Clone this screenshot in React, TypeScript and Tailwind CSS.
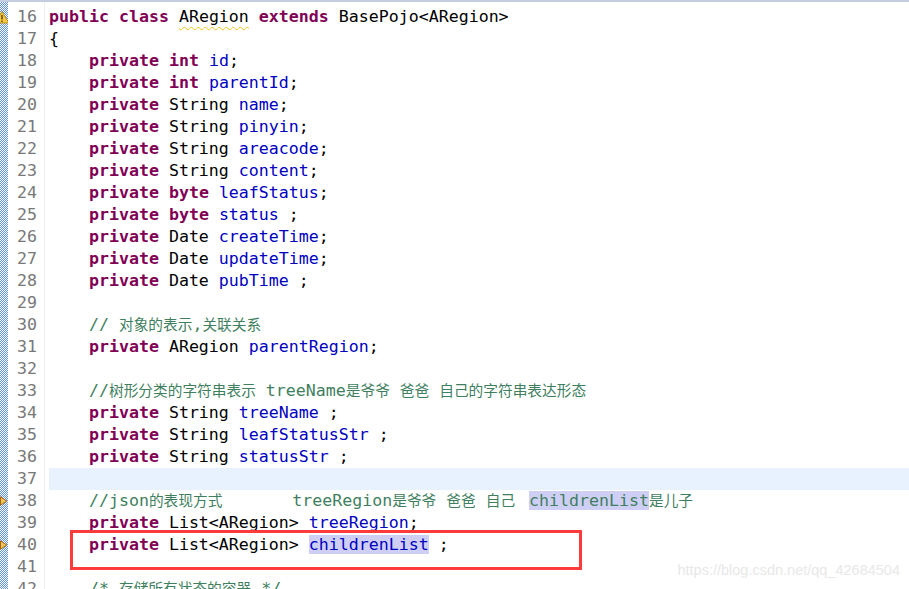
import React from "react";

type Tok = [string, string?];

const CLS: Record<string, string> = {
  k: "font-bold text-[#7f0055]",
  f: "text-[#0000c0]",
  fo: "text-[#0000c0] bg-[#cfcff5]",
  c: "text-[#3f7f5f]",
  co: "text-[#3f7f5f] bg-[#cfcff5]",
  w: "underline decoration-wavy decoration-[#f2c21a] decoration-1 underline-offset-[4px]",
  gap: "inline-block w-[4px]",
};

function renderText(text: string, key: string) {
  const parts = text.split(/([\u3000-\u9fff\uff00-\uffef]+)/);
  return parts.map((p, i) =>
    /[\u3000-\u9fff\uff00-\uffef]/.test(p) ? (
      <span key={key + i} className="text-[14.7px]">
        {p}
      </span>
    ) : (
      <React.Fragment key={key + i}>{p}</React.Fragment>
    )
  );
}

const P: Tok = ["private", "k"];

type Line = { n: number; toks: Tok[]; hl?: boolean; marker?: "warn" | "override" };

const lines: Line[] = [
  {
    n: 16,
    marker: "warn",
    toks: [["public", "k"], [" "], ["class", "k"], [" "], ["ARegion", "w"], [" "], ["extends", "k"], [" BasePojo<ARegion>"]],
  },
  { n: 17, toks: [["{"]] },
  { n: 18, toks: [["    "], P, [" "], ["int", "k"], [" "], ["id", "f"], [";"]] },
  { n: 19, toks: [["    "], P, [" "], ["int", "k"], [" "], ["parentId", "f"], [";"]] },
  { n: 20, toks: [["    "], P, [" String "], ["name", "f"], [";"]] },
  { n: 21, toks: [["    "], P, [" String "], ["pinyin", "f"], [";"]] },
  { n: 22, toks: [["    "], P, [" String "], ["areacode", "f"], [";"]] },
  { n: 23, toks: [["    "], P, [" String "], ["content", "f"], [";"]] },
  { n: 24, toks: [["    "], P, [" "], ["byte", "k"], [" "], ["leafStatus", "f"], [";"]] },
  { n: 25, toks: [["    "], P, [" "], ["byte", "k"], [" "], ["status", "f"], [" ;"]] },
  { n: 26, toks: [["    "], P, [" Date "], ["createTime", "f"], [";"]] },
  { n: 27, toks: [["    "], P, [" Date "], ["updateTime", "f"], [";"]] },
  { n: 28, toks: [["    "], P, [" Date "], ["pubTime", "f"], [" ;"]] },
  { n: 29, toks: [] },
  { n: 30, toks: [["    "], ["// 对象的表示,关联关系", "c"]] },
  { n: 31, toks: [["    "], P, [" ARegion "], ["parentRegion", "f"], [";"]] },
  { n: 32, toks: [] },
  { n: 33, toks: [["    "], ["//树形分类的字符串表示 treeName是爷爷 爸爸 自己的字符串表达形态", "c"]] },
  { n: 34, toks: [["    "], P, [" String "], ["treeName", "f"], [" ;"]] },
  { n: 35, toks: [["    "], P, [" String "], ["leafStatusStr", "f"], [" ;"]] },
  { n: 36, toks: [["    "], P, [" String "], ["statusStr", "f"], [" ;"]] },
  { n: 37, toks: [], hl: true },
  {
    n: 38,
    marker: "override",
    toks: [
      ["    "],
      ["//json的表现方式       treeRegion是爷爷 爸爸 自己 ", "c"],
      ["", "gap"],
      ["childrenList", "co"],
      ["是儿子", "c"],
    ],
  },
  { n: 39, toks: [["    "], P, [" List<ARegion> "], ["treeRegion", "f"], [";"]] },
  { n: 40, marker: "override", toks: [["    "], P, [" List<ARegion> "], ["childrenList", "fo"], [" ;"]] },
  { n: 41, toks: [] },
  { n: 42, toks: [["    "], ["/* 存储所有状态的容器 */", "c"]] },
];

function WarnIcon() {
  return (
    <svg width="8" height="13" viewBox="0 0 8 13" className="absolute left-0 top-[5px]">
      <polygon points="-5,12 2,0.5 9,12" fill="#f5c842" stroke="#b98a10" strokeWidth="1" />
      <line x1="2" y1="4" x2="2" y2="8.5" stroke="#5a4000" strokeWidth="1.4" />
      <rect x="1.3" y="9.6" width="1.4" height="1.4" fill="#5a4000" />
    </svg>
  );
}

function OverrideIcon() {
  return (
    <svg width="8" height="10" viewBox="0 0 8 10" className="absolute left-0 top-[6px]">
      <polygon points="0.5,0.8 6.8,5 0.5,9.2" fill="#f2c45a" stroke="#a8650c" strokeWidth="1" />
    </svg>
  );
}

export default function App() {
  const mono = "font-['DejaVu_Sans_Mono','Noto_Sans_CJK_SC',monospace] text-[16.6px]";
  return (
    <div className="relative w-[909px] h-[589px] overflow-hidden bg-white flex flex-col">
      <div className="h-[2px] bg-[#c3cfe1] shrink-0" />
      <div className="flex flex-1 min-h-0">
        <div className="w-[8px] shrink-0 pt-[4px] bg-[image:repeating-conic-gradient(#5f92e0_0_25%,#ffffff_0_50%)] bg-[length:2px_2px]">
          {lines.map((l) => (
            <div key={l.n} className="relative h-[22px]">
              {l.marker === "warn" && <WarnIcon />}
              {l.marker === "override" && <OverrideIcon />}
            </div>
          ))}
        </div>
        <div className={`w-[37px] shrink-0 pt-[4px] pr-[7px] text-right text-[#787878] border-r border-[#eeeeee] ${mono}`}>
          {lines.map((l) => (
            <div key={l.n} className="h-[22px] leading-[22px]">
              {l.n}
            </div>
          ))}
        </div>
        <div className={`flex-1 pt-[4px] pl-[4px] text-black ${mono}`}>
          {lines.map((l) => (
            <div
              key={l.n}
              className={`h-[22px] leading-[22px] whitespace-pre ${l.hl ? "bg-[#e8f2fe]" : ""}`}
            >
              {l.toks.map((t, i) =>
                t[1] ? (
                  <span key={i} className={CLS[t[1]]}>
                    {renderText(t[0], l.n + "-" + i)}
                  </span>
                ) : (
                  <React.Fragment key={i}>{renderText(t[0], l.n + "-" + i)}</React.Fragment>
                )
              )}
            </div>
          ))}
        </div>
      </div>
      <div className="absolute left-[70px] top-[530px] w-[512px] h-[40px] border-[3px] border-[#fd3b3b]" />
      <div className="absolute right-[9px] top-[560px] text-[14.5px] text-[#e8e8e8] font-['Liberation_Sans',Arial,sans-serif]">
        https://blog.csdn.net/qq_42684504
      </div>
    </div>
  );
}
